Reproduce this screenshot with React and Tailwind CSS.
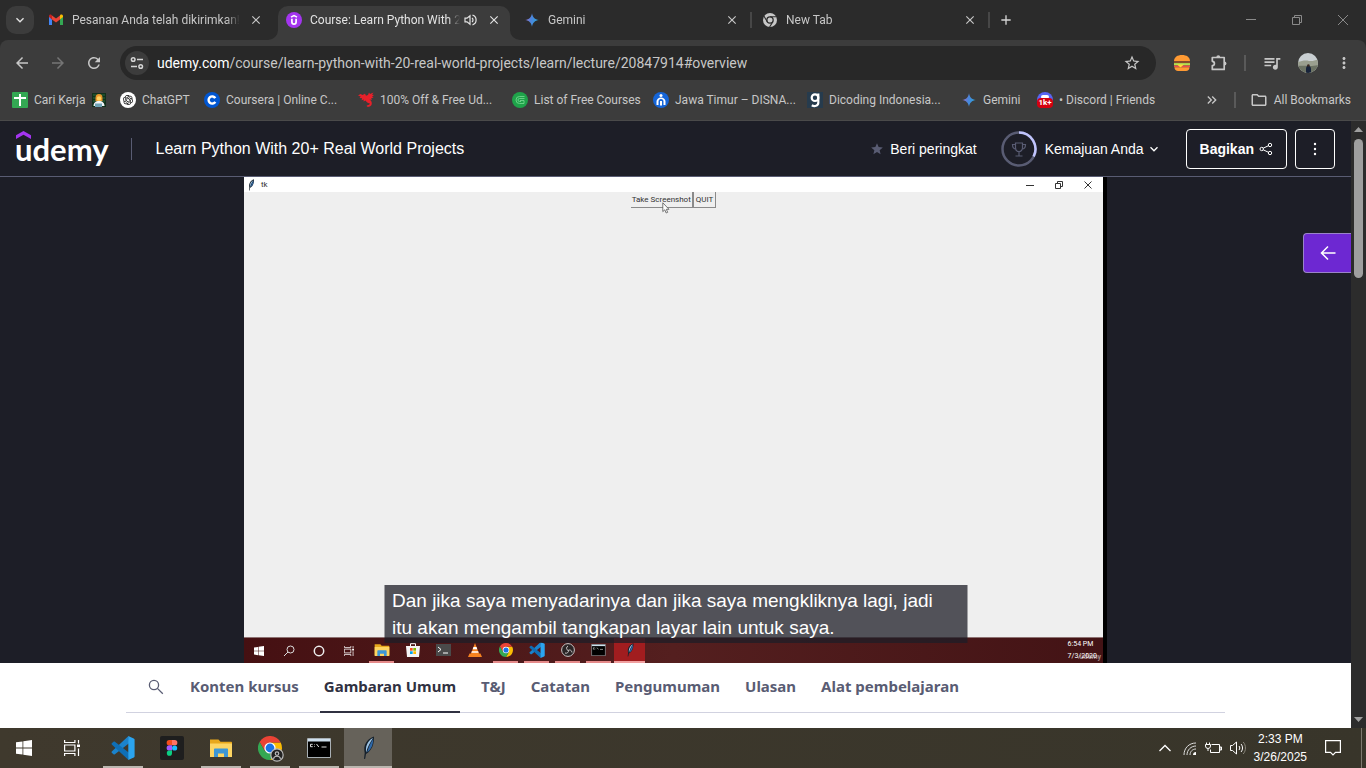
import React from "react";
import {
  MdArrowBack,
  MdArrowForward,
  MdRefresh,
  MdStarBorder,
  MdQueueMusic,
  MdMoreVert,
  MdAdd,
  MdClose,
  MdStar,
  MdKeyboardArrowDown,
  MdKeyboardDoubleArrowRight,
  MdOutlineFolder,
} from "react-icons/md";
import { RiOpenaiFill } from "react-icons/ri";

/* ---------- brand and glyph drawings ---------- */

const Gmail = () => (
  <svg viewBox="0 0 16 16" className="size-4" aria-hidden="true">
    <path d="M1 4v9h3V7.2z" fill="#4285f4" />
    <path d="M15 4v9h-3V7.2z" fill="#34a853" />
    <path d="M12 3.6V7.4L15 5V4c0-1.4-1.6-2-2.6-1.2z" fill="#fbbc04" />
    <path d="M4 7.4V3.4L8 6.5l4-3.1v4L8 10.4z" fill="#ea4335" />
    <path d="M1 4v1.1L4 7.4V3.4l-.5-.5C2.4 2 1 2.7 1 4z" fill="#c5221f" />
  </svg>
);

const UdemyBadge = () => (
  <svg viewBox="0 0 16 16" className="size-4" aria-hidden="true">
    <circle cx="8" cy="8" r="8" fill="#a435f0" />
    <path d="M5 5.2 8 3.5l3 1.700" fill="none" stroke="#fff" strokeWidth="1.500" />
    <path d="M5.900 6.800v3.300a2.100 2.100 0 0 0 4.200 0V6.800" fill="none" stroke="#fff" strokeWidth="1.700" />
  </svg>
);

const Gemini = () => (
  <svg viewBox="0 0 16 16" className="size-4" aria-hidden="true">
    <defs>
      <linearGradient id="gem" x1="0" x2="1" y1="0.4" y2="0.6">
        <stop offset="0" stopColor="#9a6fc4" />
        <stop offset="0.45" stopColor="#4a86dd" />
        <stop offset="1" stopColor="#2aa6d8" />
      </linearGradient>
    </defs>
    <path d="M8 1.200C8.500 5 11 7.500 14.800 8 11 8.500 8.500 11 8 14.800 7.500 11 5 8.500 1.200 8 5 7.500 7.500 5 8 1.200z" fill="url(#gem)" />
  </svg>
);

const ChromeGray = () => (
  <svg viewBox="0 0 16 16" className="size-4" aria-hidden="true">
    <circle cx="8" cy="8" r="7" fill="#c7c7c7" />
    <circle cx="8" cy="8" r="3.800" fill="#2b2b2b" />
    <circle cx="8" cy="8" r="2.500" fill="#c7c7c7" />
    <path d="M8 4.700h6.500M5.100 9.600 1.900 4M10.900 9.600 7.600 15" stroke="#2b2b2b" strokeWidth="1.100" />
  </svg>
);

const Chrome = ({ className }) => (
  <svg viewBox="0 0 24 24" className={className} aria-hidden="true">
    <path d="M12 12 1.600 6A12 12 0 0 1 22.400 6H12z" fill="#ea4335" />
    <path d="M12 6.600h10.700A12 12 0 0 1 12 24l5.200-9z" fill="#fbbc04" />
    <path d="M1.600 6l5.300 9L12 12V6.600h10.700L22.400 6z" fill="#ea4335" />
    <path d="M1.600 6l5.200 9L12 17.400l5.200-2.400L12 24A12 12 0 0 1 1.600 6z" fill="#34a853" />
    <circle cx="12" cy="12" r="5.600" fill="#fff" />
    <circle cx="12" cy="12" r="4.400" fill="#1a73e8" />
  </svg>
);

const VsCode = ({ className }) => (
  <svg viewBox="0 0 24 24" className={className} aria-hidden="true">
    <path d="M17.500 0 1 15.200c-.6.500-.6 1.200 0 1.700l1.500 1.300c.4.400.9.400 1.400.1L18 7.300z" fill="#1b83cc" />
    <path d="M17.500 24 1 8.800c-.6-.5-.6-1.200 0-1.700l1.500-1.300c.4-.4.9-.4 1.400-.1L18 16.700z" fill="#0f6fb6" />
    <path d="M17.300 24V0l5.400 2.400c.6.300.9.700.9 1.300v16.600c0 .6-.3 1-.9 1.300z" fill="#2ba4ef" />
  </svg>
);

const WindowsLogo = ({ className }) => (
  <svg viewBox="0 0 16 16" className={className} fill="#fff" aria-hidden="true">
    <path d="M0 2.300 6.500 1.400V7.600H0zM7.300 1.300 16 0v7.600H7.300zM0 8.400h6.500v6.200L0 13.700zM7.300 8.400H16V16l-8.700-1.300z" />
  </svg>
);

const TaskView = ({ className }) => (
  <svg viewBox="0 0 16 16" className={className} fill="none" stroke="#fff" strokeWidth="1.200" aria-hidden="true">
    <path d="M.6 0v2.500h10.300V0M.6 16v-2.500h10.300V16M.6 5h10.300v6H.6zM14.500 0v3.500M14.500 8.500V16" />
    <path d="M13 4.500h3v2.500h-3z" fill="#fff" stroke="none" />
  </svg>
);

const Explorer = ({ className }) => (
  <svg viewBox="0 0 24 24" className={className} aria-hidden="true">
    <path d="M1 3.500h8.500l2 2.200H22c.6 0 1 .4 1 1V20H1z" fill="#e8a81c" />
    <path d="M1 7.500h22V21H1z" fill="#fdd563" />
    <path d="M5 13.500c0-.6.500-1 1-1h12c.6 0 1 .4 1 1V21h-4v-3.500H9V21H5z" fill="#3d97d6" />
  </svg>
);

const Feather = ({ className }) => (
  <svg viewBox="0 0 24 24" className={className} aria-hidden="true">
    <path d="M18 0.500c-5 1.500-9 6-9.700 11-.2 2 0 3.800.4 5.500l-.7 6 1.200-.2.800-4.800c3.500-2 6.400-5.800 7.300-10 .5-2.500.9-5 .7-7.500z" fill="#15202b" />
    <path d="M17 2c-4 2-6.500 6-7 10.500-.1 1.500-.1 2.800.2 4C11.500 11 14 6.500 17 2z" fill="#9cc3e4" />
    <path d="M17.200 3c-2.800 4-4.800 8.500-6 13.200 2.700-1.700 4.800-5 5.500-8.700.3-1.700.5-3 .5-4.500z" fill="#2f68a8" />
  </svg>
);

const Cmd = ({ className }) => (
  <svg viewBox="0 0 24 20" className={className} aria-hidden="true">
    <path d="M.5.5h23v19H.5z" fill="#000" stroke="#a9b0b5" />
    <path d="M1 1h22v2.500H1z" fill="#cfe0ee" />
    <path d="M3.500 6.300h2.200M3.500 8.700h2.200M3.500 6.300v2.400M7.500 6.500v.6M7.500 8.200v.6M9.500 6l2.300 3M14.500 9h5" stroke="#ddd" fill="none" />
  </svg>
);

const Figma = () => (
  <svg viewBox="0 0 24 24" className="size-6" aria-hidden="true">
    <rect width="24" height="24" rx="2" fill="#1e1e1e" />
    <path d="M12 4H9.300a2.600 2.600 0 0 0 0 5.300H12z" fill="#f24e1e" />
    <path d="M12 4h2.700a2.600 2.600 0 0 1 0 5.300H12z" fill="#ff7262" />
    <path d="M12 9.300H9.300a2.600 2.600 0 0 0 0 5.300H12z" fill="#a259ff" />
    <circle cx="14.600" cy="12" r="2.600" fill="#1abcfe" />
    <path d="M12 14.600H9.300a2.600 2.600 0 1 0 2.700 2.600z" fill="#0acf83" />
  </svg>
);

const Sheets = () => (
  <svg viewBox="0 0 16 16" className="size-4" aria-hidden="true">
    <rect width="16" height="16" rx="1" fill="#34a853" />
    <path d="M2 6h12M8 2v12" stroke="#fff" strokeWidth="2" />
  </svg>
);

const Worker = () => (
  <svg viewBox="0 0 14 14" className="size-3.5" aria-hidden="true">
    <rect width="14" height="14" fill="#12301c" />
    <path d="M1 2h12M1 5h12M1 8h12" stroke="#2c6b3c" />
    <path d="M3.500 5a3.500 4 0 0 1 7 0v3h-7z" fill="#e8952a" />
    <circle cx="7" cy="5.500" r="2.200" fill="#ffd25e" />
    <path d="M1.500 13c0-3 2-5 5.500-5s5.500 2 5.500 5z" fill="#f0f4f6" />
    <path d="M3 10.500h7V14H3z" fill="#6fa3b5" />
  </svg>
);

const ChatGpt = () => (
  <span className="flex size-4 items-center justify-center rounded-full bg-white text-black">
    <RiOpenaiFill className="size-3" />
  </span>
);

const Coursera = () => (
  <svg viewBox="0 0 16 16" className="size-4" aria-hidden="true">
    <circle cx="8" cy="8" r="8" fill="#0056d2" />
    <path d="M11.300 6.200a3.600 3.600 0 1 0 0 3.600" fill="none" stroke="#fff" strokeWidth="2.400" />
  </svg>
);

const Dragon = () => (
  <svg viewBox="0 0 16 16" className="size-4" fill="#e8202a" aria-hidden="true">
    <path d="M0 3.500 2.500 2l2 1L7 1.800l1 2L10 3l1-2.500 1 1.500 3.500-1.500-1.500 2.200 2 .3-2 1.500 1.600 1-2.400.8.600 1.700-2.300-.6c2 1.400 2.600 3.200 2.200 4.900-.5 2-2.700 3-5.200 2.700l1.400-1-1.500-.9 2-.2c1.100-.2 1.500-.8 1.300-1.600C11 11 8.500 10.600 7.500 8.400L5.500 9.500 5.800 7.600 3.500 8.200l.7-2L1.500 6l1.200-1.500z" />
  </svg>
);

const FreeCourses = () => (
  <svg viewBox="0 0 16 16" className="size-4" aria-hidden="true">
    <circle cx="8" cy="8" r="8" fill="#1fa34a" />
    <path d="M12.500 4.500H7.500a3.500 3.500 0 0 0 0 7H12V8.500H8M12.500 6.500H7.500a1.500 1.500 0 0 0 0 3H9" fill="none" stroke="#6fd58c" strokeWidth=".9" />
  </svg>
);

const JawaTimur = () => (
  <svg viewBox="0 0 16 16" className="size-4" aria-hidden="true">
    <circle cx="8" cy="8" r="8" fill="#1565d8" />
    <circle cx="8" cy="3.500" r="1.500" fill="#fff" />
    <path d="M3.500 13V9.500a4.500 4 0 0 1 9 0V13h-2V9.500a2.500 2.500 0 0 0-5 0V13z" fill="#fff" />
    <path d="M7 9h2v4.500H7z" fill="#fff" />
  </svg>
);

const Dicoding = () => (
  <svg viewBox="0 0 16 16" className="size-4" aria-hidden="true">
    <rect width="16" height="16" fill="#263b4d" />
    <circle cx="8" cy="5.700" r="3.300" fill="none" stroke="#fff" strokeWidth="2.200" />
    <path d="M11.300 1.500v9.300c0 3.200-4 4-6.500 2.400" fill="none" stroke="#fff" strokeWidth="2.200" />
  </svg>
);

const Discord = () => (
  <span className="relative flex size-4 justify-center rounded-full bg-[#5865f2]">
    <span className="absolute top-[3px] h-1 w-2 rounded-full bg-white" />
    <span className="absolute bottom-0 h-2.5 rounded-sm bg-[#d4000f] px-px text-[8px] leading-[10px] font-bold text-white">1k+</span>
  </span>
);

const Burger = () => (
  <svg viewBox="0 0 16 16" className="size-4" aria-hidden="true">
    <path d="M0 6.200C0 2 3.500 0 8 0s8 2 8 6.200z" fill="#ff9a33" />
    <path d="M0 6.200h16v1.900H0z" fill="#8a4b2a" />
    <path d="M0 8.100h16v2.400H0z" fill="#b4e04f" />
    <path d="M0 10.500h16v1.700H0z" fill="#ef4b4b" />
    <path d="M3 9.500h7l-3.500 3z" fill="#ffd93b" />
    <path d="M.5 12.200h15c0 2.500-1.500 3.800-3.500 3.800H4C2 16 .5 14.700.5 12.200z" fill="#ff9a33" />
  </svg>
);

const Puzzle = () => (
  <svg viewBox="0 0 18 18" className="size-[18px]" fill="none" stroke="currentColor" strokeWidth="1.700" strokeLinejoin="round" aria-hidden="true">
    <path d="M3.300 3.500h11.900v11.900H3.300v-3.700c2.800-.2 2.800-4.200 0-4.400z" />
    <path d="M7.300 3.500a2 2.300 0 0 1 4 0zM15.200 7.400a2.300 2 0 0 1 0 4z" fill="currentColor" stroke="none" />
  </svg>
);

const Sound = ({ className }) => (
  <svg viewBox="0 0 14 14" className={className} fill="none" stroke="currentColor" strokeWidth="1.200" aria-hidden="true">
    <path d="M1 5.200h2L6 2.800v8.400L3 8.800H1z" />
    <path d="M8 5a2.500 2.500 0 0 1 0 4M8.500 2.200a5 5 0 0 1 0 9.600" />
  </svg>
);

const Avatar = () => (
  <svg viewBox="0 0 20 20" className="size-5 rounded-full" aria-hidden="true">
    <rect width="20" height="20" fill="#c9cfd2" />
    <path d="M0 9c4-1 7-2 11-1 4 .5 6-1 9-1.500V20H0z" fill="#9a9f8f" />
    <path d="M0 13c6-1 12 1 20-1v8H0z" fill="#6b7263" />
    <path d="M8 20v-4c0-2 1-3.500 2.200-3.500S13 14 13 16v4z" fill="#17233a" />
    <circle cx="10.400" cy="12.500" r="1.300" fill="#3b2a25" />
  </svg>
);

const SiteInfo = () => (
  <svg viewBox="0 0 14 14" className="size-3.5" fill="none" stroke="#d5d5d5" strokeWidth="1.500" aria-hidden="true">
    <circle cx="3.200" cy="3.500" r="1.800" />
    <path d="M7 3.500h6M1 10.500h6" />
    <circle cx="10.700" cy="10.500" r="1.800" />
  </svg>
);

/* ---------- browser window ---------- */

const fade = "[mask-image:linear-gradient(to_right,black_92%,transparent)]";

function Tab({ icon, title, active, audio, divider }) {
  return (
    <div
      className={
        "relative mr-1.5 flex h-[34px] w-[232px] items-center pr-2 pb-1.5 pl-2 " +
        (active ? "rounded-t-[10px] bg-[#3c3c3c] text-[#e3e3e3]" : "text-[#c7c7c7]")
      }
    >
      {active && (
        <>
          <svg viewBox="0 0 10 10" className="absolute bottom-0 -left-2.5 size-2.5" fill="#3c3c3c" aria-hidden="true">
            <path d="M10 0v10H0A10 10 0 0 0 10 0z" />
          </svg>
          <svg viewBox="0 0 10 10" className="absolute -right-2.5 bottom-0 size-2.5" fill="#3c3c3c" aria-hidden="true">
            <path d="M0 0v10h10A10 10 0 0 1 0 0z" />
          </svg>
        </>
      )}
      {icon}
      <span className={"ml-2 min-w-0 flex-1 overflow-hidden text-xs whitespace-nowrap " + fade}>{title}</span>
      {audio && <Sound className="ml-1 size-3.5" />}
      <button type="button" aria-label="Close tab" className="ml-2 flex size-4 items-center justify-center">
        <MdClose className="size-3.5" />
      </button>
      {divider && <span className="absolute top-1.5 -right-1 h-4 w-0.5 bg-[#474747]" />}
    </div>
  );
}

function TabStrip() {
  return (
    <div className="flex h-10 items-end">
      <button
        type="button"
        aria-label="Search tabs"
        className="mr-1.5 mb-1.5 ml-1.5 flex size-7 items-center justify-center rounded-[10px] bg-[#3c3c3c] text-[#e3e3e3]"
      >
        <MdKeyboardArrowDown className="size-4" />
      </button>
      <Tab icon={<Gmail />} title="Pesanan Anda telah dikirimkan!" />
      <Tab icon={<UdemyBadge />} title="Course: Learn Python With 2" active audio />
      <Tab icon={<Gemini />} title="Gemini" divider />
      <Tab icon={<ChromeGray />} title="New Tab" divider />
      <button type="button" aria-label="New tab" className="mb-1.5 flex size-7 items-center justify-center text-[#d5d5d5]">
        <MdAdd className="size-4" />
      </button>
      <div className="ml-auto flex h-10 text-[#8a8a8a]">
        <button type="button" aria-label="Minimize" className="flex w-[46px] items-center justify-center">
          <svg viewBox="0 0 10 10" className="size-2.5" stroke="currentColor"><path d="M0 4.500h10" /></svg>
        </button>
        <button type="button" aria-label="Restore" className="flex w-[46px] items-center justify-center">
          <svg viewBox="0 0 10 10" className="size-2.5" fill="none" stroke="currentColor"><path d="M.5 2.500h7v7h-7zM2.500 2.500v-2h7v7h-2" /></svg>
        </button>
        <button type="button" aria-label="Close" className="flex w-[46px] items-center justify-center">
          <svg viewBox="0 0 10 10" className="size-2.5" stroke="currentColor"><path d="M0 0l10 10M10 0 0 10" /></svg>
        </button>
      </div>
    </div>
  );
}

const toolBtn = "flex size-7 shrink-0 items-center justify-center";

function Toolbar() {
  return (
    <div className="flex h-[46px] items-center gap-2 px-2 text-[#c7c7c7]">
      <button type="button" aria-label="Back" className={toolBtn}><MdArrowBack className="size-[18px]" /></button>
      <button type="button" aria-label="Forward" className={toolBtn + " text-[#757575]"}><MdArrowForward className="size-[18px]" /></button>
      <button type="button" aria-label="Reload" className={toolBtn}><MdRefresh className="size-[18px]" /></button>
      <div className="mx-1 flex h-[34px] min-w-0 flex-1 items-center rounded-full bg-[#282828] pr-[15px] pl-[5px]">
        <button type="button" aria-label="Site information" className="flex size-6 items-center justify-center rounded-full bg-[#3c3c3c]">
          <SiteInfo />
        </button>
        <div className="ml-2 min-w-0 flex-1 truncate text-sm text-[#c7c7c7]">
          <span className="text-white">udemy.com</span>/course/learn-python-with-20-real-world-projects/learn/lecture/20847914#overview
        </div>
        <button type="button" aria-label="Bookmark this tab"><MdStarBorder className="size-[18px]" /></button>
      </div>
      <button type="button" aria-label="Burger extension" className={toolBtn}><Burger /></button>
      <button type="button" aria-label="Extensions" className={toolBtn}><Puzzle /></button>
      <span className="mx-1 h-4 w-0.5 bg-[#5a5a5a]" />
      <button type="button" aria-label="Media controls" className={toolBtn}><MdQueueMusic className="size-5" /></button>
      <button type="button" aria-label="Profile" className={toolBtn}><Avatar /></button>
      <button type="button" aria-label="Chrome menu" className={toolBtn}><MdMoreVert className="size-[18px]" /></button>
    </div>
  );
}

const bookmarks = [
  { icon: <Sheets />, label: "Cari Kerja", extra: <Worker />, width: "w-[108px]" },
  { icon: <ChatGpt />, label: "ChatGPT", width: "w-[84px]" },
  { icon: <Coursera />, label: "Coursera | Online C...", width: "w-[154px]" },
  { icon: <Dragon />, label: "100% Off & Free Ud...", width: "w-[154px]" },
  { icon: <FreeCourses />, label: "List of Free Courses", width: "w-[141px]" },
  { icon: <JawaTimur />, label: "Jawa Timur – DISNA...", width: "w-[154px]" },
  { icon: <Dicoding />, label: "Dicoding Indonesia...", width: "w-[154px]" },
  { icon: <Gemini />, label: "Gemini", width: "w-[76px]" },
  { icon: <Discord />, label: "• Discord | Friends", width: "w-[140px]" },
];

function BookmarksBar() {
  return (
    <nav aria-label="Bookmarks" className="flex h-[34px] items-center pr-[15px] pb-1.5 pl-3 text-xs text-[#c7c7c7]">
      {bookmarks.map((b) => (
        <a key={b.label} href="#bookmark" className={"flex shrink-0 items-center gap-1.5 whitespace-nowrap " + b.width}>
          {b.icon}
          <span>{b.label}</span>
          {b.extra}
        </a>
      ))}
      <button type="button" aria-label="More bookmarks" className="ml-auto"><MdKeyboardDoubleArrowRight className="size-4" /></button>
      <span className="mx-[14px] h-4 w-0.5 bg-[#5a5a5a]" />
      <button type="button" className="flex items-center gap-1.5 whitespace-nowrap">
        <MdOutlineFolder className="size-[18px]" />
        All Bookmarks
      </button>
    </nav>
  );
}

/* ---------- course page ---------- */

function CourseHeader() {
  return (
    <header className="flex h-14 shrink-0 items-center border-b border-[#595c73] bg-[#1d1e27] pr-4 pl-[15px] font-['Liberation_Sans',Arial,sans-serif] text-white">
      <a href="#home" className="relative font-[Lato,sans-serif] text-[31px] leading-8 font-bold">
        udemy
        <svg viewBox="0 0 15 8" className="absolute -top-0.5 left-px h-2 w-[15px]" aria-hidden="true">
          <path d="M0 4.200 7.500 0 15 4.200V8L7.500 3.800 0 8z" fill="#a435f0" />
        </svg>
      </a>
      <span className="mr-6 ml-[22px] h-[22px] w-px bg-[#595c73]" />
      <a href="#course" className="text-base">Learn Python With 20+ Real World Projects</a>
      <div className="ml-auto flex items-center text-sm">
        <button type="button" className="flex items-center gap-1.5">
          <MdStar className="size-3.5 text-[#595c73]" />
          Beri peringkat
        </button>
        <button type="button" className="ml-6 flex items-center gap-2">
          <svg viewBox="0 0 36 36" className="size-9" fill="none" aria-hidden="true">
            <circle cx="18" cy="18" r="16.500" stroke="#595c73" strokeWidth="2.500" />
            <path d="M18 1.500a16.500 16.500 0 0 1 14.600 24" stroke="#c0c4fc" strokeWidth="2.500" />
            <path d="M14.500 12h7v5a3.500 3.500 0 0 1-7 0zM14.500 13.500h-3c0 3 1 4.500 3.500 4.500M21.500 13.500h3c0 3-1 4.500-3.500 4.500M18 20.500V25M14.500 25h7" stroke="#595c73" strokeWidth="1.200" />
          </svg>
          Kemajuan Anda
          <svg viewBox="0 0 16 16" className="-ml-1.5 size-4" fill="none" stroke="currentColor" strokeWidth="1.300" aria-hidden="true">
            <path d="m4.500 6.300 3.500 3.500 3.500-3.500" />
          </svg>
        </button>
        <button type="button" className="ml-6 flex h-10 items-center gap-[5px] rounded border border-white px-[13px] font-bold">
          Bagikan
          <svg viewBox="0 0 14 14" className="size-3.5" fill="none" stroke="currentColor" aria-hidden="true">
            <circle cx="2.700" cy="7" r="1.700" />
            <circle cx="11" cy="3" r="1.700" />
            <circle cx="11" cy="11" r="1.700" />
            <path d="m4.200 6.200 5.300-2.500M4.200 7.800l5.300 2.500" />
          </svg>
        </button>
        <button type="button" aria-label="More options" className="ml-2 flex size-10 items-center justify-center rounded border border-white">
          <svg viewBox="0 0 14 14" className="size-3.5" fill="currentColor" aria-hidden="true">
            <circle cx="7" cy="2" r="1.200" /><circle cx="7" cy="7" r="1.200" /><circle cx="7" cy="12" r="1.200" />
          </svg>
        </button>
      </div>
    </header>
  );
}

const recordedApps = [
  { icon: <Explorer className="size-4" />, open: true },
  {
    icon: (
      <svg viewBox="0 0 14 14" className="size-3.5">
        <path d="M4.500 3V.7h5V3" fill="none" stroke="#fff" />
        <path d="M0 3h14l-1 11H1z" fill="#f4f4f4" />
        <path d="M4 5h2.700v2.700H4z" fill="#f25022" /><path d="M7.300 5H10v2.700H7.300z" fill="#7fba00" />
        <path d="M4 8.300h2.700V11H4z" fill="#00a4ef" /><path d="M7.300 8.300H10V11H7.300z" fill="#ffb900" />
      </svg>
    ),
  },
  {
    icon: (
      <svg viewBox="0 0 15 12" className="h-3 w-[15px]">
        <path d="M0 0h15v12H0z" fill="#4a4a4a" />
        <path d="m2 3 3 2.500L2 8M7 9h5" stroke="#fff" fill="none" />
      </svg>
    ),
  },
  {
    icon: (
      <svg viewBox="0 0 14 14" className="size-3.5">
        <path d="M7 0 2.500 12h9z" fill="#f58220" /><path d="M5.500 4h3l.8 2.300H4.700z" fill="#fff" />
        <path d="M3.800 8.300h6.400l.5 1.500H3.300z" fill="#fff" /><path d="M1.500 10.500h11L14 14H0z" fill="#f58220" />
      </svg>
    ),
  },
  { icon: <Chrome className="size-3.5" />, open: true },
  { icon: <VsCode className="size-4" />, open: true },
  {
    icon: (
      <svg viewBox="0 0 14 14" className="size-3.5" fill="none" stroke="#c9c5c5">
        <circle cx="7" cy="7" r="6.400" fill="#2a2526" />
        <path d="M7 3a2.500 2.500 0 0 0 0 4.500M11 9.500a2.500 2.500 0 0 0-4-2M4 10a2.500 2.500 0 0 0 3.500-2.700" />
      </svg>
    ),
    open: true,
  },
  { icon: <Cmd className="h-3 w-[15px]" />, open: true },
  { icon: <Feather className="size-3.5" />, open: true, current: true },
];

const openMark =
  " bg-[linear-gradient(#e58a8a,#e58a8a)] bg-[length:25px_2px] bg-[position:center_bottom] bg-no-repeat [background-origin:border-box]";

function Recording() {
  return (
    <div className="relative flex aspect-[863/486] bg-black pr-1">
      <div className="flex flex-1 flex-col bg-[#efefef] text-[#333]">
        <div className="flex h-[15px] items-center gap-1 bg-white pl-px">
          <Feather className="size-3" />
          <span className="text-[8px] leading-none">tk</span>
          <div className="ml-auto flex w-[88px] justify-around text-[#333]">
            <svg viewBox="0 0 8 8" className="size-2" stroke="currentColor"><path d="M0 4.500h8" /></svg>
            <svg viewBox="0 0 8 8" className="size-2" fill="none" stroke="currentColor"><path d="M.5 2.500h5v5h-5zM2.500 2.500v-2h5v5h-2" /></svg>
            <svg viewBox="0 0 8 8" className="size-2" stroke="currentColor"><path d="m.5.5 7 7M7.500.5l-7 7" /></svg>
          </div>
        </div>
        <div className="relative flex justify-center text-[8px] leading-[15px] whitespace-nowrap">
          <button type="button" className="border-r-2 border-b border-[#8a8a8a] px-px">Take Screenshot</button>
          <button type="button" className="border-r border-b border-[#8a8a8a] px-0.5">QUIT</button>
          <svg viewBox="0 0 8 12" className="absolute top-2.5 left-1/2 -ml-3 h-3 w-2" aria-hidden="true">
            <path d="M.8.8v8.800l2-1.800 1.400 3.200 1.500-.7-1.400-3h2.700z" fill="#fff" stroke="#555" strokeWidth=".8" />
          </svg>
        </div>
        <div className="mt-auto flex h-[26px] items-stretch border-t border-[#8d7272] bg-linear-to-r from-[#451012] via-[#541f1f] to-[#431315] text-white">
          <div className="mr-0.5 flex">
            <span className="flex w-[30px] items-center justify-center"><WindowsLogo className="size-2.5" /></span>
            <span className="flex w-[30px] items-center justify-center">
              <svg viewBox="0 0 12 12" className="size-3" fill="none" stroke="#ddd"><circle cx="7.500" cy="4.500" r="3.500" /><path d="M5 7 1 11" /></svg>
            </span>
            <span className="flex w-[30px] items-center justify-center">
              <svg viewBox="0 0 12 12" className="size-3" fill="none" stroke="#eee" strokeWidth="1.500"><circle cx="6" cy="6" r="4.700" /></svg>
            </span>
            <span className="flex w-[30px] items-center justify-center"><TaskView className="size-2.5" /></span>
          </div>
          {recordedApps.map((a, i) => (
            <span
              key={i}
              className={
                "flex w-[31px] items-center justify-center border-b-2 " +
                (a.current ? "border-[#f0a0a0] bg-[#a11d1f]" : "border-transparent") +
                (a.open && !a.current ? openMark : "")
              }
            >
              {a.icon}
            </span>
          ))}
          <div className="relative mr-1.5 ml-auto text-[7px] leading-3">
            <div>6:54 PM</div>
            <div>7/3/2020</div>
            <div className="absolute -right-1 bottom-0 font-bold text-white/50">udemy</div>
          </div>
        </div>
      </div>
      <p className="absolute bottom-5 left-1/2 w-[583px] -translate-x-1/2 bg-[#1d1e27]/75 px-2 py-0.5 font-['Liberation_Sans',Arial,sans-serif] text-[19px] leading-[27px] text-white">
        Dan jika saya menyadarinya dan jika saya mengkliknya lagi, jadi
        <br />
        itu akan mengambil tangkapan layar lain untuk saya.
      </p>
    </div>
  );
}

const sections = ["Konten kursus", "Gambaran Umum", "T&J", "Catatan", "Pengumuman", "Ulasan", "Alat pembelajaran"];

function SectionTabs() {
  return (
    <nav aria-label="Course sections" className="shrink-0 bg-white px-[126px] pb-[15px]">
      <div className="flex h-[50px] items-stretch border-b border-[#d1d2e0] font-['Noto_Sans',sans-serif] text-[15px] font-bold text-[#595c73]">
        <button type="button" aria-label="Search" className="mx-[22px] flex items-center pb-0.5">
          <svg viewBox="0 0 16 16" className="size-4" fill="none" stroke="currentColor" strokeWidth="1.300" aria-hidden="true">
            <circle cx="6" cy="6" r="4.600" /><path d="m9.400 9.400 5.400 5.400" />
          </svg>
        </button>
        <div className="flex gap-[17px]">
          {sections.map((s, i) => (
            <button
              key={s}
              type="button"
              className={"-mb-px border-b-2 px-1 pb-0.5 whitespace-nowrap " + (i === 1 ? "border-[#303141] text-[#303141]" : "border-transparent")}
            >
              {s}
            </button>
          ))}
        </div>
      </div>
    </nav>
  );
}

function Scrollbar() {
  return (
    <div className="flex w-[15px] shrink-0 flex-col items-center bg-[#2c2c2c] py-1.5" aria-hidden="true">
      <svg viewBox="0 0 9 5" className="h-[5px] w-[9px]" fill="#9f9f9f"><path d="M4.500 0 9 5H0z" /></svg>
      <span className="mt-[7px] h-[139px] w-[9px] rounded-full bg-[#9f9f9f]" />
      <svg viewBox="0 0 9 5" className="mt-auto h-[5px] w-[9px]" fill="#9f9f9f"><path d="M0 0h9L4.500 5z" /></svg>
    </div>
  );
}

/* ---------- desktop taskbar ---------- */

const apps = [
  { name: "Visual Studio Code", icon: <VsCode className="size-6" />, open: true },
  { name: "Figma", icon: <Figma /> },
  { name: "File Explorer", icon: <Explorer className="size-6" />, open: true },
  {
    name: "Google Chrome",
    icon: (
      <span className="relative">
        <Chrome className="size-6" />
        <svg viewBox="0 0 12 12" className="absolute -right-0.5 -bottom-0.5 size-3.5" fill="none" stroke="#bbb">
          <circle cx="6" cy="6" r="5.300" fill="#222" /><circle cx="6" cy="4.800" r="1.500" /><path d="M3 9.300c.5-3 5.500-3 6 0" />
        </svg>
      </span>
    ),
    open: true,
  },
  { name: "Command Prompt", icon: <Cmd className="h-5 w-6" />, open: true },
  { name: "Tk", icon: <Feather className="size-6" />, current: true },
];

function Taskbar() {
  return (
    <footer className="flex h-10 shrink-0 items-stretch bg-linear-to-r from-[#3f392d] to-[#38352a] text-white">
      <button type="button" aria-label="Start" className="flex w-12 items-center justify-center"><WindowsLogo className="size-4" /></button>
      <button type="button" aria-label="Task view" className="mr-[3px] flex w-12 items-center justify-center"><TaskView className="size-4" /></button>
      <div className="flex gap-px">
        {apps.map((a) => (
          <button
            key={a.name}
            type="button"
            aria-label={a.name}
            className={"relative flex w-12 items-center justify-center " + (a.current ? "bg-[#66625a]" : "")}
          >
            {a.icon}
            {a.open && <span className="absolute inset-x-1 bottom-0 h-0.5 bg-[#bbb7b0]" />}
            {a.current && <span className="absolute inset-x-0 bottom-0 h-0.5 bg-[#bbb7b0]" />}
          </button>
        ))}
      </div>
      <div className="ml-auto flex items-center">
        <svg viewBox="0 0 12 8" className="mr-3 h-2 w-3" fill="none" stroke="#fff" strokeWidth="1.300"><path d="m.5 7 5.500-5.500L11.500 7" /></svg>
        <svg viewBox="0 0 14 14" className="mr-2 size-3.5" fill="none" stroke="#ddd">
          <path d="M1 14C1 7 6 2 13 2M4 14c0-5 4-9 9-9M7 14c0-3.500 2.500-6 6-6" />
          <path d="M10 14c0-2 1.200-3 3-3v3z" fill="#fff" stroke="none" />
        </svg>
        <svg viewBox="0 0 17 12" className="mr-2 h-3 w-[17px]" fill="none" stroke="#fff">
          <path d="M6.500 2.500h8v8h-9v-3M15 5v3h1.500V5zM1.500.5v2M4.500.5v2M.5 2.500h5V4a2.500 2.500 0 0 1-5 0zM3 6.500V9" />
        </svg>
        <svg viewBox="0 0 16 14" className="mr-2 h-3.5 w-4" fill="none" stroke="#fff">
          <path d="M.5 4.500h2L6.500 1v12l-4-3.500h-2zM9 5c1 1.200 1 2.800 0 4M11 3c2 2.200 2 5.800 0 8" />
          <path d="M13.200 1c3 3.300 3 8.700 0 12" stroke="#8a867c" />
        </svg>
        <div className="text-center font-['Liberation_Sans',Arial,sans-serif] text-xs leading-[18px]">
          <div>2:33 PM</div>
          <div>3/26/2025</div>
        </div>
        <button type="button" aria-label="Notifications" className="mr-5 ml-[18px]">
          <svg viewBox="0 0 16 16" className="size-4" fill="none" stroke="#fff" strokeWidth="1.200"><path d="M.6.6h14.800v11.800h-4.900L8 15l-2.500-2.600H.6z" /></svg>
        </button>
      </div>
      <span className="mr-1 w-px bg-[#7d796f]" />
    </footer>
  );
}

export default function App() {
  return (
    <div className="flex h-screen flex-col overflow-hidden bg-[#2b2b2b] font-[Roboto,'Noto_Sans',sans-serif]">
      <div className="shrink-0">
        <TabStrip />
        <div className="rounded-t-lg border-b border-[#4a4a4a] bg-[#3c3c3c]">
          <Toolbar />
          <BookmarksBar />
        </div>
      </div>
      <div className="flex min-h-0 flex-1">
        <main className="flex min-w-0 flex-1 flex-col">
          <CourseHeader />
          <section className="relative flex min-h-0 flex-1 justify-center bg-[#1d1e27]">
            <Recording />
            <button
              type="button"
              aria-label="Open course content"
              className="absolute top-14 right-0 flex h-10 w-12 items-center justify-center rounded-l border border-r-0 border-[#9a83c9] bg-[#6d28d2] text-white"
            >
              <svg viewBox="0 0 16 16" className="size-4" fill="none" stroke="currentColor" strokeWidth="1.500"><path d="M15.500 8H1.500M8 1.500 1.500 8 8 14.500" /></svg>
            </button>
          </section>
          <SectionTabs />
        </main>
        <Scrollbar />
      </div>
      <Taskbar />
    </div>
  );
}
